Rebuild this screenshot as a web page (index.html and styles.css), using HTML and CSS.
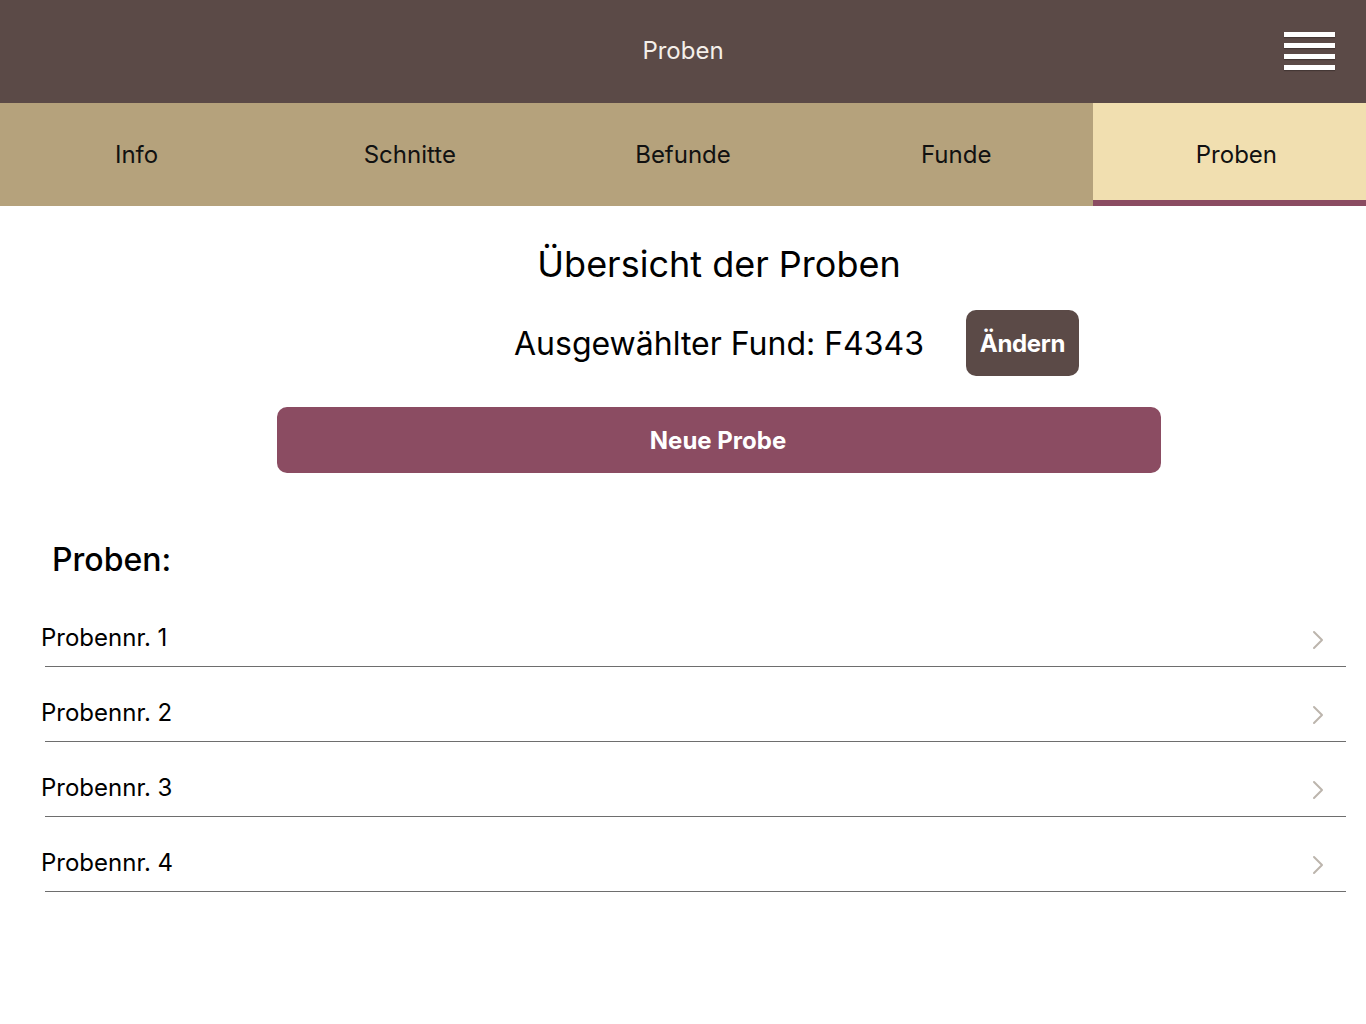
FILE: index.html
```html
<!DOCTYPE html>
<html lang="de">
<head>
<meta charset="utf-8">
<title>Proben</title>
<link rel="stylesheet" href="styles.css">
</head>
<body>
<header class="topbar">
  <div class="topbar-title">Proben</div>
  <div class="burger" aria-label="Menü">
    <span></span><span></span><span></span><span></span>
  </div>
</header>
<nav class="tabs">
  <div class="tab">Info</div>
  <div class="tab">Schnitte</div>
  <div class="tab">Befunde</div>
  <div class="tab">Funde</div>
  <div class="tab active">Proben</div>
</nav>
<main>
  <section class="intro">
    <h1 class="title">Übersicht der Proben</h1>
    <div class="fund-row">
      <div class="fund-spacer"></div>
      <div class="fund-text">Ausgewählter Fund: F4343</div>
      <div class="fund-action"><button class="btn-change">Ändern</button></div>
    </div>
    <button class="btn-new">Neue Probe</button>
  </section>
  <section class="list">
    <h2 class="list-title">Proben:</h2>
    <div class="row"><span class="row-label">Probennr. 1</span><svg class="chev" width="12" height="20" viewBox="0 0 12 20"><path d="M2 2 L10 10 L2 18" fill="none" stroke="#bcb5ad" stroke-width="2" stroke-linecap="round" stroke-linejoin="round"/></svg></div>
    <div class="row"><span class="row-label">Probennr. 2</span><svg class="chev" width="12" height="20" viewBox="0 0 12 20"><path d="M2 2 L10 10 L2 18" fill="none" stroke="#bcb5ad" stroke-width="2" stroke-linecap="round" stroke-linejoin="round"/></svg></div>
    <div class="row"><span class="row-label">Probennr. 3</span><svg class="chev" width="12" height="20" viewBox="0 0 12 20"><path d="M2 2 L10 10 L2 18" fill="none" stroke="#bcb5ad" stroke-width="2" stroke-linecap="round" stroke-linejoin="round"/></svg></div>
    <div class="row"><span class="row-label">Probennr. 4</span><svg class="chev" width="12" height="20" viewBox="0 0 12 20"><path d="M2 2 L10 10 L2 18" fill="none" stroke="#bcb5ad" stroke-width="2" stroke-linecap="round" stroke-linejoin="round"/></svg></div>
  </section>
</main>
</body>
</html>
```
FILE: styles.css
```css
* { box-sizing: border-box; }
html, body { margin: 0; padding: 0; background: #ffffff; }
body {
  font-family: Inter, "Noto Sans", "Liberation Sans", sans-serif;
  color: #000000;
  width: 1366px;
}
.topbar {
  height: 103px;
  background: #5b4a47;
  display: flex;
  align-items: center;
  justify-content: center;
  position: relative;
}
.topbar-title {
  color: #f4efea;
  font-size: 24px;
  line-height: 30px;
  margin-top: -2px;
}
.burger {
  position: absolute;
  right: 31px;
  top: 32px;
  width: 51px;
  display: flex;
  flex-direction: column;
  gap: 6px;
}
.burger span {
  display: block;
  height: 5px;
  background: #ffffff;
  box-shadow: 0 1px 1px rgba(0,0,0,0.25);
}
.tabs {
  height: 103px;
  background: #b5a27c;
  display: grid;
  grid-template-columns: repeat(5, 1fr);
}
.tab {
  display: flex;
  align-items: center;
  justify-content: center;
  font-size: 24px;
  color: #111111;
}
.tab.active {
  background: #f1dfb0;
  box-shadow: inset 0 -6px 0 #8b4c62;
  padding-left: 14px;
}
.intro {
  padding-left: 72px;
  display: flex;
  flex-direction: column;
  align-items: center;
}
.title {
  margin: 36px 0 0;
  font-size: 36px;
  line-height: 44px;
  font-weight: 400;
}
.fund-row {
  margin-top: 24px;
  width: 100%;
  display: grid;
  grid-template-columns: 1fr auto 1fr;
  align-items: center;
}
.fund-text {
  font-size: 32px;
  line-height: 40px;
  padding-top: 2px;
}
.fund-action { padding-left: 42px; }
.btn-change {
  height: 66px;
  width: 113px;
  border: none;
  border-radius: 10px;
  background: #5b4a47;
  color: #ffffff;
  font-family: inherit;
  font-size: 24px;
  font-weight: 700;
  letter-spacing: -0.3px;
  padding: 0;
}
.btn-new {
  margin-top: 31px;
  width: 884px;
  height: 66px;
  border: none;
  border-radius: 10px;
  background: #8b4c62;
  color: #ffffff;
  font-family: inherit;
  font-size: 24px;
  font-weight: 700;
  padding: 0 2px 0 0;
}
.list-title {
  margin: 67px 0 0 52px;
  font-size: 32px;
  line-height: 40px;
  font-weight: 500;
}
.list-title + .row { margin-top: 12px; }
.row {
  margin: 0 20px 0 45px;
  height: 75px;
  padding-top: 33px;
  border-bottom: 1px solid #6e6e6e;
  display: flex;
  align-items: flex-start;
  justify-content: space-between;
}
.row-label {
  margin-left: -4px;
  font-size: 24px;
  line-height: 26px;
}
.chev {
  margin-right: 22px;
  margin-top: 5px;
}
```
